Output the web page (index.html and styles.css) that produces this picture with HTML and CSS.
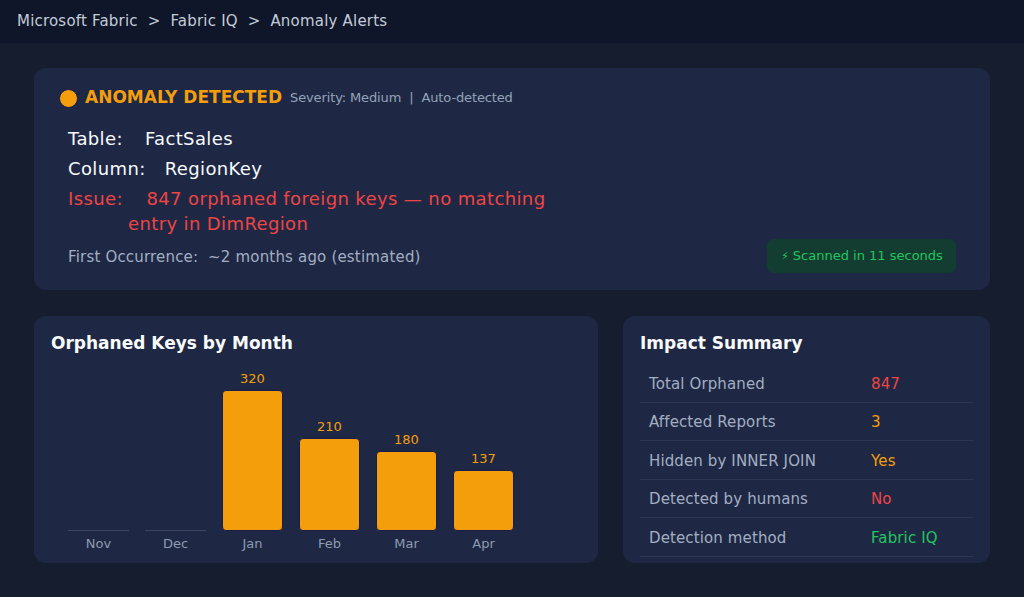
FILE: index.html
```html
<!DOCTYPE html>
<html lang="en">
<head>
<meta charset="utf-8">
<title>Anomaly Alerts</title>
<link rel="stylesheet" href="styles.css">
</head>
<body>
<header class="topbar">Microsoft Fabric&nbsp; &gt;&nbsp; Fabric IQ&nbsp; &gt;&nbsp; Anomaly Alerts</header>
<main class="page">
  <section class="card alert">
    <div class="alert-head">
      <span class="dot"></span>
      <span class="alert-title">ANOMALY DETECTED</span>
      <span class="alert-meta">Severity: Medium&nbsp; |&nbsp; Auto-detected</span>
    </div>
    <div class="details">
      <div class="detail"><span class="lbl lbl-table">Table:</span><span>FactSales</span></div>
      <div class="detail"><span class="lbl lbl-col">Column:</span><span>RegionKey</span></div>
      <div class="detail issue"><span class="lbl lbl-issue">Issue:</span>847 orphaned foreign keys — no matching entry in DimRegion</div>
      <div class="foot">
        <div class="first">First Occurrence:&nbsp; ~2 months ago (estimated)</div>
        <div class="badge"><span class="bolt">⚡</span> Scanned in 11 seconds</div>
      </div>
    </div>
  </section>

  <div class="lower">
    <section class="card chart-card">
      <h2 class="card-title">Orphaned Keys by Month</h2>
      <div class="chart">
        <div class="col"><div class="bar empty"></div><div class="month">Nov</div></div>
        <div class="col"><div class="bar empty"></div><div class="month">Dec</div></div>
        <div class="col"><div class="value">320</div><div class="bar" style="height:141px"></div><div class="month">Jan</div></div>
        <div class="col"><div class="value">210</div><div class="bar" style="height:93px"></div><div class="month">Feb</div></div>
        <div class="col"><div class="value">180</div><div class="bar" style="height:80px"></div><div class="month">Mar</div></div>
        <div class="col"><div class="value">137</div><div class="bar" style="height:61px"></div><div class="month">Apr</div></div>
      </div>
    </section>

    <section class="card impact-card">
      <h2 class="card-title">Impact Summary</h2>
      <div class="impact">
        <div class="row"><span class="k">Total Orphaned</span><span class="v red">847</span></div>
        <div class="row"><span class="k">Affected Reports</span><span class="v orange">3</span></div>
        <div class="row"><span class="k">Hidden by INNER JOIN</span><span class="v orange">Yes</span></div>
        <div class="row"><span class="k">Detected by humans</span><span class="v red">No</span></div>
        <div class="row"><span class="k">Detection method</span><span class="v green">Fabric IQ</span></div>
      </div>
    </section>
  </div>
</main>
</body>
</html>
```
FILE: styles.css
```css
* { box-sizing: border-box; }
html, body { margin: 0; padding: 0; }
body {
  background: #161d2f;
  font-family: "DejaVu Sans", "Noto Sans", sans-serif;
  color: #f1f5f9;
  width: 1024px;
  height: 597px;
  overflow: hidden;
}
.topbar {
  height: 43px;
  background: #0f1629;
  color: #c3cbd8;
  font-size: 15px;
  letter-spacing: 0.2px;
  line-height: 43px;
  padding: 0 17px;
}
.page {
  padding: 25px 34px 34px;
}
.card {
  background: #1e2844;
  border-radius: 12px;
}
.alert {
  padding: 18px 34px 18px 26px;
  height: 222px;
}
.alert-head {
  display: flex;
  align-items: center;
  height: 22px;
}
.dot {
  width: 19px;
  height: 19px;
  border-radius: 50%;
  background: #f59e0b;
  border: 1px solid #1a1d4a;
  margin-left: -1px;
  margin-right: 7px;
  margin-top: 3px;
}
.alert-title {
  color: #f59e0b;
  font-weight: bold;
  font-size: 17px;
  margin-right: 8px;
}
.alert-meta {
  color: #94a3b8;
  font-size: 13px;
  letter-spacing: -0.13px;
}
.details {
  padding-left: 8px;
  margin-top: 18px;
}
.detail {
  font-size: 18px;
  line-height: 25px;
  letter-spacing: 0.38px;
  margin-bottom: 5px;
  color: #f8fafc;
}
.lbl-table { margin-right: 22px; }
.lbl-col { margin-right: 19px; }
.lbl-issue { margin-right: 23.5px; }
.issue {
  color: #ef4444;
  width: 510px;
  padding-left: 60px;
  text-indent: -60px;
  margin-bottom: 5px;
}
.foot {
  display: flex;
  justify-content: space-between;
  align-items: center;
}
.first {
  color: #a3aec2;
  font-size: 15px;
  letter-spacing: 0.18px;
}
.badge {
  height: 34px;
  width: 189px;
  border-radius: 7px;
  background: #133d31;
  color: #22c55e;
  font-size: 13px;
  line-height: 33px;
  padding-left: 14px;
  margin-top: -2px;
}
.bolt { font-size: 11px; }

.lower {
  display: grid;
  grid-template-columns: 564px 1fr;
  gap: 25px;
  margin-top: 26px;
  height: 247px;
}
.chart-card {
  padding: 17px 17px 11px;
}
.impact-card {
  padding: 17px 17px 6px;
}
.card-title {
  margin: 0;
  font-size: 17px;
  line-height: 20px;
  font-weight: bold;
  color: #f8fafc;
}
.chart {
  height: 199px;
  display: flex;
  align-items: flex-end;
  gap: 16px;
  padding-left: 17px;
}
.col {
  width: 61px;
  display: flex;
  flex-direction: column;
  align-items: stretch;
}
.value {
  color: #f59e0b;
  font-size: 13px;
  line-height: 16px;
  text-align: center;
  margin-bottom: 3px;
}
.bar {
  background: #f59e0b;
  border: 1px solid #1a1d4a;
  border-radius: 4px;
}
.bar.empty {
  height: 1px;
  border: 0;
  border-radius: 0;
  background: #3a4661;
}
.month {
  color: #8e9ab0;
  font-size: 13px;
  line-height: 16px;
  text-align: center;
  margin-top: 5px;
}
.impact {
  margin-top: 11px;
}
.row {
  display: grid;
  grid-template-columns: 222px 1fr;
  padding: 2px 9px 0;
  height: 38.5px;
  align-items: center;
  border-bottom: 1px solid #2b3652;
  font-size: 15px;
  letter-spacing: 0.12px;
}
.k { color: #a3aec2; }
.red { color: #ef4444; }
.orange { color: #f59e0b; }
.green { color: #22c55e; }
```
